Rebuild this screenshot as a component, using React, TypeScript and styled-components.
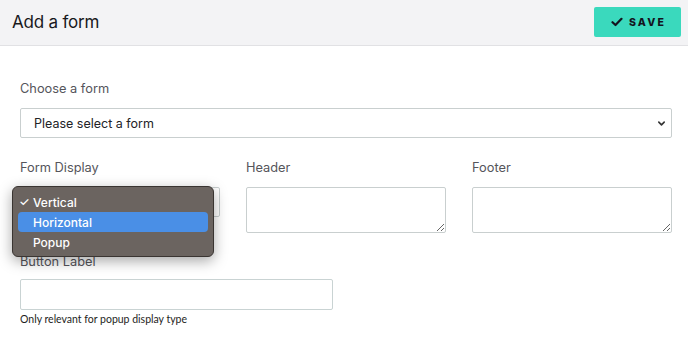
import React from "react";
import styled, { createGlobalStyle } from "styled-components";

const Global = createGlobalStyle`
  html, body { margin: 0; padding: 0; background: #ffffff; }
  body { font-family: "Inter", "Noto Sans", sans-serif; color: #1f1f24; }
  * { box-sizing: border-box; }
`;

const Page = styled.div`
  width: 688px;
  height: 347px;
  overflow: hidden;
  background: #ffffff;
`;

const TopBar = styled.header`
  height: 46px;
  background: #f3f3f5;
  border-bottom: 1px solid #e1e1e4;
  display: flex;
  align-items: center;
  justify-content: space-between;
  padding: 0 7px 1px 12px;
`;

const Title = styled.h1`
  margin: 0;
  font-size: 17px;
  font-weight: 400;
  letter-spacing: -0.2px;
  color: #18181c;
`;

const SaveButton = styled.button`
  width: 87px;
  height: 30px;
  border: none;
  border-radius: 2px;
  background: #3ad9bd;
  display: flex;
  align-items: center;
  justify-content: center;
  gap: 6px;
  font-family: "Inter", sans-serif;
  font-weight: 800;
  font-size: 10.5px;
  letter-spacing: 2.2px;
  color: #14141e;
  padding: 0 0 0 2px;
`;

const Main = styled.main`
  padding: 34px 16px 0 20px;
  display: flex;
  flex-direction: column;
`;

const Field = styled.div<{ $width?: number }>`
  position: relative;
  display: flex;
  flex-direction: column;
  width: ${(p) => (p.$width ? `${p.$width}px` : "auto")};
`;

const Label = styled.label<{ $gap?: number }>`
  font-size: 12.8px;
  line-height: 17px;
  color: #55555b;
  margin-bottom: ${(p) => p.$gap ?? 11}px;
`;

const SelectBox = styled.div`
  position: relative;
  height: 30px;
  border: 1px solid #c9cfcf;
  border-radius: 2px;
  background: #fff;
  display: flex;
  align-items: center;
  padding: 0 5px 0 13px;
  font-size: 12.5px;
  color: #222226;
`;

const SelectText = styled.span`
  flex: 1;
`;

const Chevron = styled.svg`
  width: 9px;
  height: 9px;
  color: #333;
`;

const Row = styled.div<{ $top?: number }>`
  display: grid;
  grid-template-columns: 1fr 1fr 1fr;
  column-gap: 26px;
  margin-top: ${(p) => p.$top ?? 21}px;
`;

const TextArea = styled.textarea`
  height: 46px;
  border: 1px solid #c9cfcf;
  border-radius: 2px;
  resize: vertical;
  font-family: inherit;
  width: 100%;
  margin: 0;
  display: block;
`;

const TextInput = styled.input`
  height: 31px;
  border: 1px solid #c9d3d3;
  border-radius: 2px;
  font-family: inherit;
  width: 100%;
  margin: 0;
`;

const Help = styled.div`
  margin-top: 3px;
  font-family: "Lato", sans-serif;
  font-size: 10.5px;
  color: #1e1e22;
`;

const Popup = styled.ul`
  position: absolute;
  left: -8px;
  top: 27px;
  width: 202px;
  margin: 0;
  padding: 5px 5px 4px;
  list-style: none;
  background: #6b6460;
  border: 1px solid #3a3532;
  border-radius: 6px;
  box-shadow: 0 4px 14px rgba(0, 0, 0, 0.35);
  font-family: "Inter", "Noto Sans", sans-serif;
  z-index: 5;
`;

const Option = styled.li<{ $active?: boolean }>`
  height: 20px;
  display: flex;
  align-items: center;
  padding-left: 15px;
  position: relative;
  border-radius: 4px;
  background: ${(p) => (p.$active ? "#4a8fe6" : "transparent")};
  color: #ffffff;
  font-size: 12px;
  font-weight: 500;
`;

const Check = styled.span`
  position: absolute;
  left: 1px;
  top: 2px;
  font-size: 12px;
`;

const ChevronIcon = () => (
  <Chevron viewBox="0 0 10 10" fill="none" stroke="currentColor" strokeWidth="1.8" strokeLinecap="round" strokeLinejoin="round">
    <path d="M2 3.5 L5 6.5 L8 3.5" />
  </Chevron>
);

export default function App() {
  return (
    <Page>
      <Global />
      <TopBar>
        <Title>Add a form</Title>
        <SaveButton>
          <svg width="12" height="10" viewBox="0 0 12 10" fill="none" stroke="#14141e" strokeWidth="2.2" strokeLinecap="round" strokeLinejoin="round">
            <path d="M1.5 5.2 L4.5 8 L10.5 1.8" />
          </svg>
          SAVE
        </SaveButton>
      </TopBar>
      <Main>
        <Field>
          <Label>Choose a form</Label>
          <SelectBox>
            <SelectText>Please select a form</SelectText>
            <ChevronIcon />
          </SelectBox>
        </Field>
        <Row>
          <Field>
            <Label>Form Display</Label>
            <SelectBox>
              <SelectText />
              <ChevronIcon />
            </SelectBox>
            <Popup>
              <Option>
                <Check>✓</Check>Vertical
              </Option>
              <Option $active>Horizontal</Option>
              <Option>Popup</Option>
            </Popup>
          </Field>
          <Field>
            <Label>Header</Label>
            <TextArea />
          </Field>
          <Field>
            <Label>Footer</Label>
            <TextArea />
          </Field>
        </Row>
        <Row $top={20}>
          <Field $width={313}>
            <Label $gap={9}>Button Label</Label>
            <TextInput />
            <Help>Only relevant for popup display type</Help>
          </Field>
        </Row>
      </Main>
    </Page>
  );
}
